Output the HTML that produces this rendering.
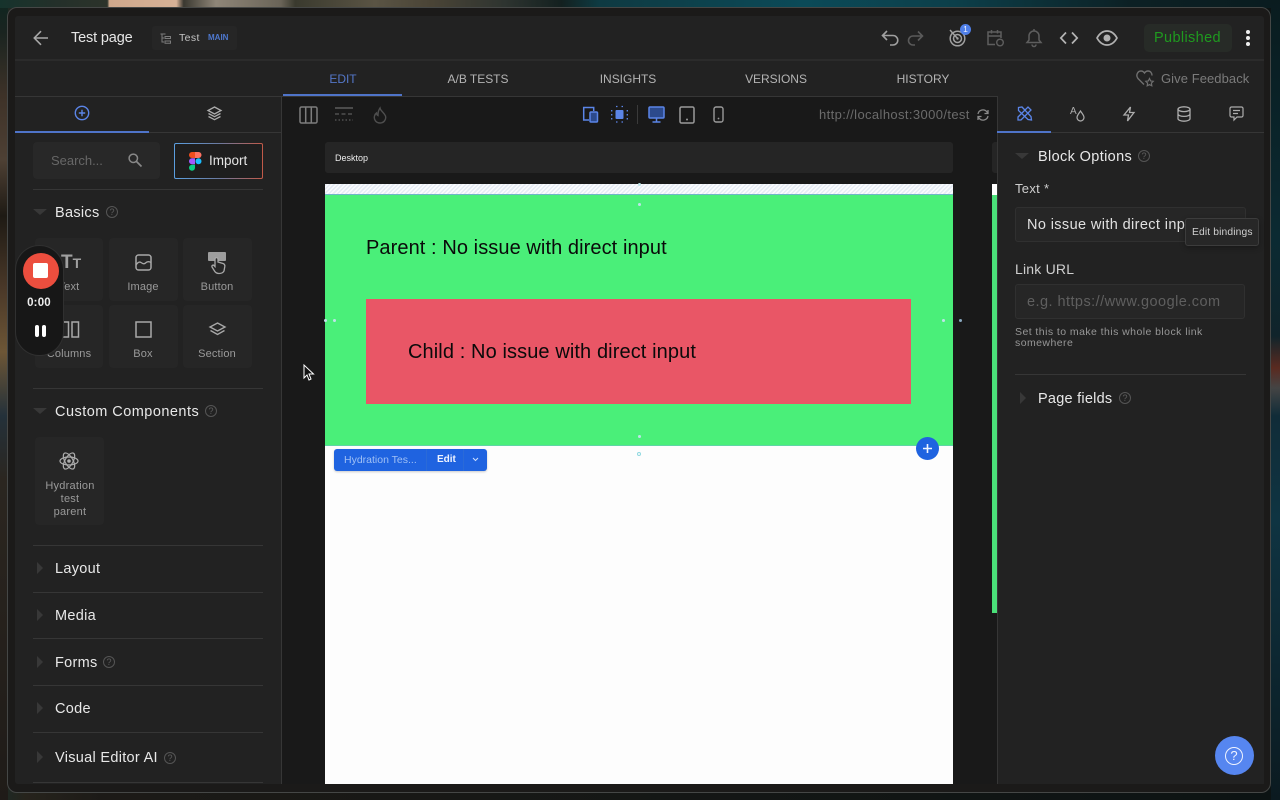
<!DOCTYPE html>
<html><head><meta charset="utf-8"><title>Test page</title>
<style>
*{box-sizing:border-box}
html,body{margin:0;padding:0;width:1280px;height:800px;overflow:hidden;background:#0b1414;font-family:"Liberation Sans",sans-serif}
.a{position:absolute}
.t{position:absolute;white-space:nowrap;line-height:1}
.ctr{transform:translateX(-50%)}
svg{position:absolute;overflow:visible;fill:none}
.ln{position:absolute;background:#333;height:1px}
.cell{position:absolute;background:#262626;border-radius:4px}
.lab{position:absolute;white-space:nowrap;line-height:1;font-size:11px;color:#9a9a9a;transform:translateX(-50%);letter-spacing:.15px}
.head{position:absolute;white-space:nowrap;line-height:1;font-size:14.5px;color:#e8e8e8;letter-spacing:.3px}
.tab{position:absolute;white-space:nowrap;line-height:1;font-size:12px;color:#b4b4b4;transform:translateX(-50%);letter-spacing:-.02px}
.dn{position:absolute;width:0;height:0;border-left:7px solid transparent;border-right:7px solid transparent;border-top:6px solid #383838}
.rt{position:absolute;width:0;height:0;border-top:6px solid transparent;border-bottom:6px solid transparent;border-left:6px solid #383838}
.help{position:absolute;width:12px;height:12px;border:1px solid #555;border-radius:50%;color:#5f5f5f;font-size:9px;line-height:10px;text-align:center}
.hd{position:absolute;width:3px;height:3px;background:#bfe3ea;border-radius:50%}
</style></head>
<body>
<!-- wallpaper -->
<div class="a" style="left:0;top:0;width:1280px;height:800px;background:linear-gradient(90deg,#1d2a26 0,#26231c 2%,#1c1a17 8%,#0c1313 100%)"></div>
<div class="a" style="left:0;top:0;width:8px;height:800px;background:linear-gradient(180deg,#0e2620 0,#1a2420 4%,#3e3228 12%,#4e4034 20%,#1e1a14 27%,#4a3828 36%,#6d5636 44%,#24313a 52%,#2b2620 60%,#1f1b18 100%)"></div>
<div class="a" style="left:0;top:0;width:720px;height:8px;background:linear-gradient(90deg,#16332c 0,#24302a 8%,#2c332a 14.900%,#cfa88c 15.200%,#d6b196 24.500%,#3a3830 25.500%,#8f8678 30%,#6a6458 39%,#3a3a2e 41%,#5a5444 52%,#4a4436 60%,#2e3430 70%,#13201f 78%,#0d3f48 84%)"></div>
<div class="a" style="left:600px;top:0;width:680px;height:8px;background:linear-gradient(90deg,#0e3a42 0,#0b4a58 30%,#0c3f4a 52%,#0c2024 78%,#0a1c1f 100%)"></div>
<div class="a" style="left:1271px;top:0;width:9px;height:800px;background:linear-gradient(180deg,#0a1c1f 0,#0b2a32 30%,#10242b 42%,#5a2a20 46%,#444 48.500%,#102c38 52%,#0f3442 65%,#0b1a20 100%)"></div>

<!-- frame -->
<div class="a" style="left:7px;top:7px;width:1264px;height:786px;border-radius:10px;border:1px solid #454746;background:#1b1a19"></div>
<!-- app -->
<div class="a" style="left:15px;top:16px;width:1249px;height:768px;background:#222;border-radius:3px;overflow:hidden"></div>

<!-- top bar -->
<div class="ln" style="left:15px;top:59px;width:1249px;background:#2b2b2b;height:2px"></div>
<svg style="left:33px;top:30px" width="16" height="16" viewBox="0 0 16 16"><path d="M15 8H1.500M8 1.200 1.300 8 8 14.800" stroke="#a8a8a8" stroke-width="1.600"/></svg>
<div class="t" style="left:71px;top:31px;font-size:14.500px;color:#e6e6e6;letter-spacing:-.15px">Test page</div>
<div class="a" style="left:152px;top:26px;width:85px;height:24px;background:#262626;border-radius:3px"></div>
<svg style="left:160px;top:33px" width="11" height="11" viewBox="0 0 11 11"><path d="M.5 1h5M2 1v8h2M2 5h2M5 3.500h5.500v2H5zM5 8h5.500v2.300H5z" stroke="#7c7c7c" stroke-width="1"/></svg>
<div class="t" style="left:179px;top:33px;font-size:10.500px;color:#c4c4c4;letter-spacing:.4px">Test</div>
<div class="t" style="left:208px;top:34px;font-size:8px;font-weight:bold;color:#4e78cf">MAIN</div>

<!-- right toolbar -->
<svg style="left:881px;top:29px" width="18" height="18" viewBox="0 0 18 18"><path d="M6 2 1.500 6.500 6 11M2 6.500h10a4.700 4.700 0 0 1 0 9.500H9" stroke="#a0a0a0" stroke-width="1.600"/></svg>
<svg style="left:907px;top:30px" width="17" height="16" viewBox="0 0 17 16"><path d="M11 1.500l4.500 4.500L11 10.500M15 6H6a4.500 4.500 0 0 0 0 9h2" stroke="#5a5a5a" stroke-width="1.600"/></svg>
<svg style="left:949px;top:29px" width="18" height="18" viewBox="0 0 18 18"><circle cx="8.500" cy="9.500" r="7.300" stroke="#a0a0a0" stroke-width="1.500"/><circle cx="8.500" cy="9.500" r="4" stroke="#a0a0a0" stroke-width="1.500"/><circle cx="8.500" cy="9.500" r="1.200" fill="#a0a0a0"/><path d="M1 1l7.500 8.500" stroke="#a0a0a0" stroke-width="1.500"/></svg>
<div class="a" style="left:960px;top:24px;width:11px;height:11px;border-radius:50%;background:#4f7fe8;color:#e8eeff;font-size:8.500px;line-height:11px;text-align:center">1</div>
<svg style="left:987px;top:29px" width="18" height="18" viewBox="0 0 18 18"><path d="M8 15.500H1V3h13v6M1 7h13M4.500 1v3.500M10.500 1v3.500" stroke="#5e5e5e" stroke-width="1.500"/><circle cx="13" cy="13.500" r="3.300" stroke="#5e5e5e" stroke-width="1.400"/></svg>
<svg style="left:1026px;top:29px" width="16" height="18" viewBox="0 0 16 18"><path d="M1 13.500h14l-2-2.500V7a5 5 0 0 0-10 0v4zM6 15.500a2 2 0 0 0 4 0M8 0v2" stroke="#5e5e5e" stroke-width="1.500"/></svg>
<svg style="left:1060px;top:31px" width="18" height="14" viewBox="0 0 18 14"><path d="M6 1.500.8 7 6 12.500M12 1.500 17.200 7 12 12.500" stroke="#b4b4b4" stroke-width="1.700"/></svg>
<svg style="left:1096px;top:29px" width="22" height="18" viewBox="0 0 22 18"><path d="M1 9c2.500-4.500 6-7 10-7s7.500 2.500 10 7c-2.500 4.500-6 7-10 7s-7.500-2.500-10-7z" stroke="#b0b0b0" stroke-width="1.700"/><circle cx="11" cy="9" r="3.500" fill="#b0b0b0"/></svg>
<div class="a" style="left:1144px;top:24px;width:88px;height:28px;background:#272b27;border-radius:5px"></div>
<div class="t" style="left:1154px;top:31px;font-size:14.500px;color:#1f9a1f;letter-spacing:.36px">Published</div>
<div class="a" style="left:1246px;top:30px;width:4px;height:4px;background:#eee;border-radius:50%"></div>
<div class="a" style="left:1246px;top:36px;width:4px;height:4px;background:#eee;border-radius:50%"></div>
<div class="a" style="left:1246px;top:42px;width:4px;height:4px;background:#eee;border-radius:50%"></div>

<!-- tabs -->
<div class="tab" style="left:343px;top:73px;color:#5477c8">EDIT</div>
<div class="tab" style="left:478px;top:73px">A/B TESTS</div>
<div class="tab" style="left:628px;top:73px">INSIGHTS</div>
<div class="tab" style="left:776px;top:73px">VERSIONS</div>
<div class="tab" style="left:923px;top:73px">HISTORY</div>
<svg style="left:1136px;top:70px" width="19" height="18" viewBox="0 0 19 18"><path d="M8 14.500 2 8.500C-.5 5.500 1.500 1 5 1c1.500 0 2.700.8 3.500 2C9.300 1.800 10.500 1 12 1c2.500 0 4 2 4 4.500" stroke="#6f6f6f" stroke-width="1.400"/><path d="M13.500 8.500l1.200 2.500 2.500.3-1.800 1.800.4 2.700-2.300-1.200-2.300 1.200.4-2.700-1.800-1.800 2.500-.3z" stroke="#6f6f6f" stroke-width="1.200"/></svg>
<div class="t" style="left:1161px;top:72px;font-size:13px;color:#7b7b7b;letter-spacing:.07px">Give Feedback</div>
<div class="ln" style="left:15px;top:96px;width:1249px;background:#363636"></div>
<div class="a" style="left:283px;top:94px;width:119px;height:2px;background:#4f74c9"></div>

<!-- left panel -->
<div class="a" style="left:281px;top:96px;width:1px;height:688px;background:#363636"></div>
<div class="ln" style="left:15px;top:132px;width:266px;background:#363636"></div>
<div class="a" style="left:15px;top:131px;width:134px;height:2px;background:#4f74c9"></div>
<svg style="left:74px;top:105px" width="16" height="16" viewBox="0 0 16 16"><circle cx="8" cy="8" r="6.700" stroke="#5b85e8" stroke-width="1.400"/><path d="M8 4.800v6.400M4.800 8h6.400" stroke="#5b85e8" stroke-width="1.400"/></svg>
<svg style="left:207px;top:106px" width="15" height="15" viewBox="0 0 15 15"><path d="M7.500 1 14 4.500 7.500 8 1 4.500zM1.500 7.500l6 3.200 6-3.200M1.500 10.500l6 3.200 6-3.200" stroke="#adadad" stroke-width="1.300"/></svg>
<div class="a" style="left:33px;top:142px;width:127px;height:37px;background:#282828;border-radius:4px"></div>
<div class="t" style="left:51px;top:154px;font-size:13px;color:#676767;letter-spacing:-.02px">Search...</div>
<svg style="left:128px;top:153px" width="14" height="14" viewBox="0 0 14 14"><circle cx="5.300" cy="5.300" r="4.200" stroke="#888" stroke-width="1.500"/><path d="M8.500 8.500 13.500 13.500" stroke="#888" stroke-width="1.700"/></svg>
<div class="a" style="left:174px;top:143px;width:89px;height:36px;border-radius:2px;background:linear-gradient(#1e1e1e,#1e1e1e) padding-box,linear-gradient(90deg,#5b9fe0,#6a7aa0 50%,#c25a48) border-box;border:1.200px solid transparent"></div>
<svg style="left:189px;top:152px" width="13" height="19" viewBox="0 0 13 19"><path d="M0 3a3 3 0 0 1 3-3h3v6H3a3 3 0 0 1-3-3z" fill="#f24e1e"/><path d="M6 0h3.500a3 3 0 0 1 0 6H6z" fill="#ff7262"/><path d="M0 9.300a3 3 0 0 1 3-3h3v6H3a3 3 0 0 1-3-3z" fill="#a259ff"/><circle cx="9.500" cy="9.300" r="3" fill="#1abcfe"/><path d="M0 15.700a3 3 0 0 1 3-3h3v3a3 3 0 0 1-6 0z" fill="#0acf83"/></svg>
<div class="t" style="left:209px;top:154px;font-size:13.500px;color:#e4e4e4;letter-spacing:0">Import</div>
<div class="ln" style="left:33px;top:189px;width:230px;background:#363636"></div>

<div class="dn" style="left:33px;top:209px"></div>
<div class="head" style="left:55px;top:206px">Basics</div>
<div class="help" style="left:106px;top:206px">?</div>

<div class="cell" style="left:35px;top:238px;width:68px;height:63px"></div>
<div class="cell" style="left:109px;top:238px;width:69px;height:63px"></div>
<div class="cell" style="left:183px;top:238px;width:69px;height:63px"></div>
<div class="cell" style="left:35px;top:305px;width:68px;height:63px"></div>
<div class="cell" style="left:109px;top:305px;width:69px;height:63px"></div>
<div class="cell" style="left:183px;top:305px;width:69px;height:63px"></div>

<div class="t" style="left:61px;top:253px;font-size:19px;font-weight:bold;color:#a0a0a0">T<span style="font-size:14px">T</span></div>
<div class="lab" style="left:69px;top:282px">Text</div>
<svg style="left:135px;top:254px" width="17" height="17" viewBox="0 0 17 17"><rect x="1" y="1" width="15" height="15" rx="2.500" stroke="#a8a8a8" stroke-width="1.500"/><path d="M1 11c2-3 3.500-3.500 5-2.500s3 2 4.500.5 3-2 5.500-.5" stroke="#a8a8a8" stroke-width="1.300"/></svg>
<div class="lab" style="left:143px;top:282px">Image</div>
<svg style="left:207px;top:251px" width="21" height="23" viewBox="0 0 21 23"><rect x="1" y="1" width="18" height="9" rx="1" fill="#9d9d9d"/><path d="M8 8.500c0-2.500 3-2.500 3 0V11l5 1.500c1.500.5 2 1.500 1.800 3L17 20c-1 2-2.500 2.500-5 2.500-2 0-3.500-.8-4.500-2.500L5 16c-.5-1.500 1-2.500 2-1.500l1 1z" fill="#262626" stroke="#a8a8a8" stroke-width="1.300"/></svg>
<div class="lab" style="left:217px;top:282px">Button</div>

<svg style="left:61px;top:321px" width="18" height="17" viewBox="0 0 18 17"><rect x="1" y="1" width="6.500" height="15" stroke="#a8a8a8" stroke-width="1.500"/><rect x="11" y="1" width="6.500" height="15" stroke="#a8a8a8" stroke-width="1.500"/></svg>
<div class="lab" style="left:69px;top:349px">Columns</div>
<svg style="left:135px;top:321px" width="17" height="17" viewBox="0 0 17 17"><rect x="1" y="1" width="15" height="15" stroke="#a8a8a8" stroke-width="1.500"/></svg>
<div class="lab" style="left:143px;top:349px">Box</div>
<svg style="left:209px;top:322px" width="17" height="15" viewBox="0 0 17 15"><path d="M8.500 1 16 5 8.500 9 1 5zM1.500 8.500l7 4 7-4" stroke="#a8a8a8" stroke-width="1.400"/></svg>
<div class="lab" style="left:217px;top:349px">Section</div>

<div class="ln" style="left:33px;top:388px;width:230px;background:#363636"></div>
<div class="dn" style="left:33px;top:408px"></div>
<div class="head" style="left:55px;top:405px;letter-spacing:.47px">Custom Components</div>
<div class="help" style="left:205px;top:405px">?</div>
<div class="cell" style="left:35px;top:437px;width:69px;height:88px"></div>
<svg style="left:59px;top:451px" width="20" height="20" viewBox="0 0 20 20"><g stroke="#adadad" stroke-width="1.200"><ellipse cx="10" cy="10" rx="9" ry="4"/><ellipse cx="10" cy="10" rx="9" ry="4" transform="rotate(60 10 10)"/><ellipse cx="10" cy="10" rx="9" ry="4" transform="rotate(120 10 10)"/></g><circle cx="10" cy="10" r="1.800" fill="#adadad"/></svg>
<div class="lab" style="left:70px;top:481px;letter-spacing:.25px">Hydration</div>
<div class="lab" style="left:70px;top:494px;letter-spacing:.25px">test</div>
<div class="lab" style="left:70px;top:507px;letter-spacing:.25px">parent</div>

<div class="ln" style="left:33px;top:545px;width:230px;background:#363636"></div>
<div class="rt" style="left:37px;top:562px"></div>
<div class="head" style="left:55px;top:562px">Layout</div>
<div class="ln" style="left:33px;top:592px;width:230px;background:#363636"></div>
<div class="rt" style="left:37px;top:609px"></div>
<div class="head" style="left:55px;top:609px">Media</div>
<div class="ln" style="left:33px;top:638px;width:230px;background:#363636"></div>
<div class="rt" style="left:37px;top:656px"></div>
<div class="head" style="left:55px;top:656px">Forms</div>
<div class="help" style="left:103px;top:656px">?</div>
<div class="ln" style="left:33px;top:685px;width:230px;background:#363636"></div>
<div class="rt" style="left:37px;top:702px"></div>
<div class="head" style="left:55px;top:702px">Code</div>
<div class="ln" style="left:33px;top:732px;width:230px;background:#363636"></div>
<div class="rt" style="left:37px;top:751px"></div>
<div class="head" style="left:55px;top:751px">Visual Editor AI</div>
<div class="help" style="left:164px;top:752px">?</div>
<div class="ln" style="left:33px;top:782px;width:230px;background:#363636"></div>

<!-- canvas -->
<div class="a" style="left:282px;top:97px;width:715px;height:687px;background:#191919"></div>
<svg style="left:299px;top:106px" width="19" height="18" viewBox="0 0 19 18"><rect x="1" y="1" width="17" height="16" rx="1.500" stroke="#7d7d7d" stroke-width="1.500"/><path d="M6.700 1v16M12.300 1v16" stroke="#7d7d7d" stroke-width="1.500"/></svg>
<svg style="left:334px;top:107px" width="20" height="15" viewBox="0 0 20 15"><path d="M1 1h18" stroke="#6a6a6a" stroke-width="1.200"/><path d="M1 7h18" stroke="#6a6a6a" stroke-width="1.100" stroke-dasharray="4 2.500"/><path d="M1 13h18" stroke="#6a6a6a" stroke-width="1.100" stroke-dasharray="1.500 2"/></svg>
<svg style="left:373px;top:107px" width="14" height="17" viewBox="0 0 14 17"><path d="M7 1c.5 3 4 4.500 5.500 8 1 4-2 7-5.500 7s-6.500-3-5.500-7c.4-1.500 1.300-2.500 2-3 0 1 .5 2 1.500 2.500C5 6 5.500 3 7 1z" stroke="#4e4e4e" stroke-width="1.400"/></svg>

<svg style="left:582px;top:106px" width="17" height="17" viewBox="0 0 17 17"><path d="M7 14H1.700V1.500h10V5" stroke="#5b85e8" stroke-width="1.500"/><rect x="8" y="6" width="7.500" height="10" rx="1" fill="#2c4a8c" stroke="#5b85e8" stroke-width="1.500"/></svg>
<svg style="left:611px;top:106px" width="17" height="17" viewBox="0 0 17 17"><rect x="4.500" y="4" width="8" height="9" rx="1" fill="#5b85e8"/><path d="M5 .5h1.500M10.500.5H12M5 16h1.500M10.500 16H12M.7 4v1.500M.7 8v1.500M.7 12v1.500M16.300 4v1.500M16.300 8v1.500M16.300 12v1.500" stroke="#5b85e8" stroke-width="1.300"/></svg>
<div class="a" style="left:637px;top:105px;width:1px;height:19px;background:#3a3a3a"></div>
<svg style="left:648px;top:106px" width="17" height="17" viewBox="0 0 17 17"><rect x="1" y="1" width="15" height="11" rx="1" fill="#2c4a8c" stroke="#5b85e8" stroke-width="1.500"/><path d="M8.500 12v4M4.500 16h8" stroke="#5b85e8" stroke-width="1.500"/></svg>
<svg style="left:679px;top:106px" width="16" height="18" viewBox="0 0 16 18"><rect x="1" y="1" width="14" height="16" rx="1.500" stroke="#9a9a9a" stroke-width="1.500"/><circle cx="8" cy="13.500" r="1" fill="#9a9a9a"/></svg>
<svg style="left:713px;top:106px" width="11" height="17" viewBox="0 0 11 17"><rect x="1" y="1" width="9" height="15" rx="2" stroke="#9a9a9a" stroke-width="1.400"/><circle cx="5.500" cy="12.500" r=".9" fill="#9a9a9a"/></svg>
<div class="t" style="left:819px;top:108px;font-size:13px;color:#6b6b6b;letter-spacing:.38px">http://localhost:3000/test</div>
<svg style="left:977px;top:109px" width="12" height="12" viewBox="0 0 12 12"><path d="M1 5a5 5 0 0 1 9-2l1 1.500M11 7a5 5 0 0 1-9 2L1 7.500M11 1v3.500H7.500M1 11V7.500h3.500" stroke="#8a8a8a" stroke-width="1.300"/></svg>

<div class="a" style="left:325px;top:142px;width:628px;height:31px;background:#252525;border-radius:3px"></div>
<div class="t" style="left:335px;top:154px;font-size:9px;color:#ececec">Desktop</div>
<div class="a" style="left:992px;top:142px;width:5px;height:31px;background:#252525;border-radius:3px 0 0 3px"></div>

<!-- page -->
<div class="a" style="left:325px;top:184px;width:628px;height:600px;background:#fdfdfd"></div>
<div class="a" style="left:325px;top:184px;width:628px;height:10px;background:repeating-linear-gradient(135deg,#e6ecf5 0,#e6ecf5 1.500px,#fbfcfe 1.500px,#fbfcfe 3px)"></div>
<div class="a" style="left:325px;top:194px;width:628px;height:252px;background:#4aef79;border-top:1px solid #6fb6c8;border-bottom:1px solid #5fd5a5"></div>
<div class="t" style="left:366px;top:238px;font-size:20px;color:#0a0a0a;letter-spacing:.08px">Parent : No issue with direct input</div>
<div class="a" style="left:366px;top:299px;width:545px;height:105px;background:#e95666"></div>
<div class="t" style="left:408px;top:342px;font-size:20px;color:#0a0a0a;letter-spacing:.1px">Child : No issue with direct input</div>
<div class="hd" style="left:638px;top:183px"></div>
<div class="hd" style="left:638px;top:203px"></div>
<div class="hd" style="left:324px;top:319px"></div>
<div class="hd" style="left:333px;top:319px"></div>
<div class="hd" style="left:942px;top:319px"></div>
<div class="hd" style="left:959px;top:319px;background:#8aa8c0"></div>
<div class="hd" style="left:638px;top:435px"></div>
<div class="a" style="left:637px;top:452px;width:4px;height:4px;border:1px solid #8fd8e0;border-radius:50%"></div>

<!-- selection toolbar -->
<div class="a" style="left:334px;top:449px;width:153px;height:22px;background:#1f63e0;border-radius:3px;box-shadow:0 1px 2px rgba(0,0,0,.2)"></div>
<div class="a" style="left:426px;top:449px;width:1px;height:22px;background:#2a6ad8"></div>
<div class="a" style="left:463px;top:449px;width:1px;height:22px;background:#2a6ad8"></div>
<div class="t" style="left:344px;top:455px;font-size:10.500px;color:#9fc0f5;letter-spacing:0">Hydration Tes...</div>
<div class="t" style="left:437px;top:455px;font-size:10px;font-weight:bold;color:#eef3ff">Edit</div>
<svg style="left:472px;top:457px" width="7" height="5" viewBox="0 0 7 5"><path d="M1 1l2.500 2.500L6 1" stroke="#cfe0ff" stroke-width="1"/></svg>
<div class="a" style="left:916px;top:437px;width:23px;height:23px;border-radius:50%;background:#1f63e0"></div>
<svg style="left:922px;top:443px" width="11" height="11" viewBox="0 0 11 11"><path d="M5.500 1v9M1 5.500h9" stroke="#f0f4ff" stroke-width="1.600"/></svg>

<!-- neighbouring preview strip -->
<div class="a" style="left:992px;top:184px;width:5px;height:11px;background:#fff"></div>
<div class="a" style="left:992px;top:195px;width:5px;height:418px;background:#4ae079"></div>

<!-- right panel -->
<div class="a" style="left:997px;top:96px;width:267px;height:688px;background:#222;border-left:1px solid #363636"></div>
<div class="ln" style="left:997px;top:132px;width:267px;background:#363636"></div>
<div class="a" style="left:997px;top:131px;width:54px;height:2px;background:#4f74c9"></div>
<svg style="left:1017px;top:106px" width="15" height="15" viewBox="0 0 15 15"><path d="M1 11 11 1l3 3L4 14H1zM1.500 1.500 5 1l9 9.500.5 3.500-3.500-.5-9.500-9z" stroke="#5b85e8" stroke-width="1.300"/></svg>
<div class="t" style="left:1070px;top:107px;font-size:10px;color:#adadad">A</div>
<svg style="left:1076px;top:110px" width="9" height="12" viewBox="0 0 9 12"><path d="M4.500 1c2 3 3.500 4.500 3.500 6.500a3.500 3.500 0 0 1-7 0C1 5.500 2.500 4 4.500 1z" stroke="#adadad" stroke-width="1.200"/></svg>
<svg style="left:1123px;top:106px" width="12" height="16" viewBox="0 0 12 16"><path d="M7.500 1 1 9h4.500L4.500 15 11 6.500H6.500z" stroke="#adadad" stroke-width="1.300"/></svg>
<svg style="left:1177px;top:106px" width="14" height="16" viewBox="0 0 14 16"><ellipse cx="7" cy="3.200" rx="6" ry="2.400" stroke="#adadad" stroke-width="1.300"/><path d="M1 3.200v9.600C1 14 3.700 15.200 7 15.200s6-1.200 6-2.400V3.200M1 8c0 1.300 2.700 2.400 6 2.400s6-1.100 6-2.400" stroke="#adadad" stroke-width="1.300"/></svg>
<svg style="left:1229px;top:106px" width="15" height="15" viewBox="0 0 15 15"><path d="M2.500 1h10A1.500 1.500 0 0 1 14 2.500v7a1.500 1.500 0 0 1-1.500 1.500H8L5 14v-3H2.500A1.500 1.500 0 0 1 1 9.500v-7A1.500 1.500 0 0 1 2.500 1zM4 4.500h7M4 7.500h5" stroke="#adadad" stroke-width="1.200"/></svg>

<div class="dn" style="left:1015px;top:153px"></div>
<div class="head" style="left:1038px;top:150px;letter-spacing:.36px">Block Options</div>
<div class="help" style="left:1138px;top:150px">?</div>
<div class="t" style="left:1015px;top:182px;font-size:13px;color:#cfcfcf;letter-spacing:.3px">Text *</div>
<div class="a" style="left:1015px;top:207px;width:231px;height:35px;background:#262626;border:1px solid #303030;border-radius:3px"></div>
<div class="t" style="left:1027px;top:218px;font-size:14.500px;color:#e0e0e0;letter-spacing:.38px">No issue with direct inp</div>
<div class="a" style="left:1185px;top:218px;width:74px;height:28px;background:#272727;border:1px solid #3c3c3c;border-radius:3px;box-shadow:0 2px 6px rgba(0,0,0,.3)"></div>
<div class="t" style="left:1192px;top:228px;font-size:10.300px;color:#cfcfcf;letter-spacing:.13px">Edit bindings</div>
<div class="t" style="left:1015px;top:262px;font-size:14px;color:#cfcfcf;letter-spacing:.2px">Link URL</div>
<div class="a" style="left:1015px;top:284px;width:230px;height:35px;background:#262626;border:1px solid #303030;border-radius:3px"></div>
<div class="t" style="left:1027px;top:295px;font-size:14.500px;color:#5f5f5f;letter-spacing:.45px">e.g. https://www.google.com</div>
<div class="t" style="left:1015px;top:327px;font-size:10.500px;color:#979797;letter-spacing:.44px">Set this to make this whole block link</div>
<div class="t" style="left:1015px;top:338px;font-size:10.500px;color:#979797;letter-spacing:.44px">somewhere</div>
<div class="ln" style="left:1015px;top:374px;width:231px;background:#363636"></div>
<div class="rt" style="left:1020px;top:392px"></div>
<div class="head" style="left:1038px;top:392px;letter-spacing:.24px">Page fields</div>
<div class="help" style="left:1119px;top:392px">?</div>

<!-- help button -->
<div class="a" style="left:1215px;top:736px;width:39px;height:39px;border-radius:50%;background:#5686f0"></div>
<div class="a" style="left:1225px;top:747px;width:18px;height:18px;border:1.600px solid #f0f4ff;border-radius:50%;color:#f0f4ff;font-size:13px;line-height:15px;text-align:center">?</div>

<!-- recorder -->
<div class="a" style="left:15px;top:245px;width:49px;height:111px;border-radius:25px;background:#171717;border:1px solid #303030"></div>
<div class="a" style="left:22.500px;top:253px;width:36px;height:36px;border-radius:50%;background:#ec4e3e"></div>
<div class="a" style="left:33px;top:263px;width:15px;height:15px;border-radius:2px;background:#fff"></div>
<div class="t ctr" style="left:39px;top:298px;font-size:11.500px;font-weight:bold;color:#eee;letter-spacing:.2px">0:00</div>
<div class="a" style="left:35px;top:325px;width:4px;height:12px;border-radius:2px;background:#fff"></div>
<div class="a" style="left:42px;top:325px;width:4px;height:12px;border-radius:2px;background:#fff"></div>

<!-- cursor -->
<svg style="left:303px;top:364px" width="12" height="18" viewBox="0 0 12 18"><path d="M1 1v13l3-3 2 5 2-1-2-5h4.500z" fill="#111" stroke="#fff" stroke-width="1"/></svg>
</body></html>
